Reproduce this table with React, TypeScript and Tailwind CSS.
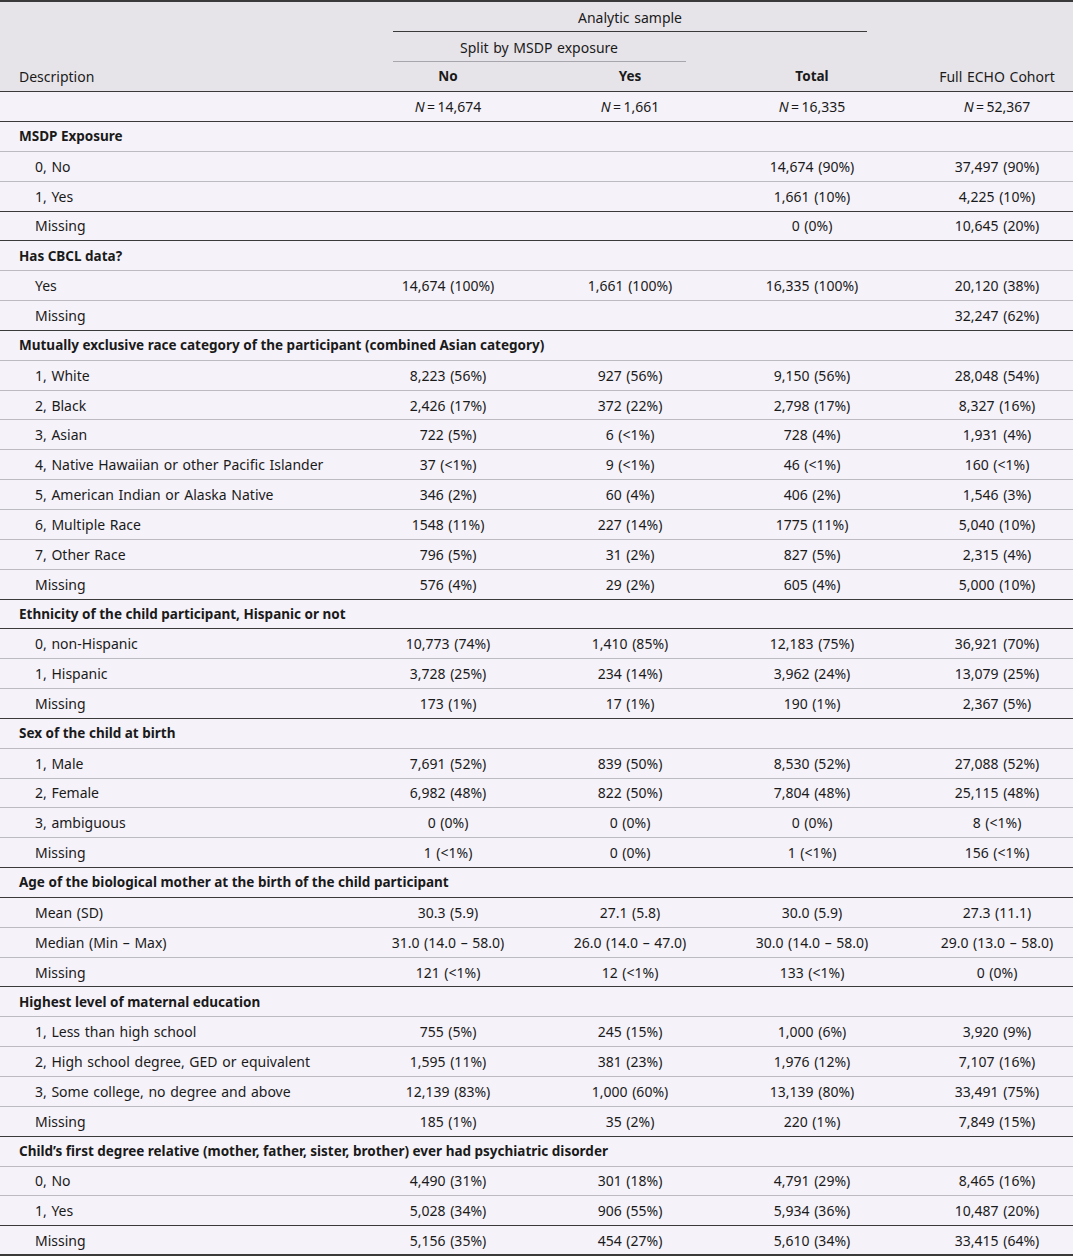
import React from 'react';

type Row = {
  label: string;
  vals?: [string, string, string, string];
  head?: boolean;
  dark?: boolean;
};

const GRID = 'grid grid-cols-[357px_182px_182px_182px_170px]';

const ROWS: Row[] = [
  { label: 'MSDP Exposure', head: true },
  { label: '0, No', vals: ['', '', '14,674 (90%)', '37,497 (90%)'] },
  { label: '1, Yes', vals: ['', '', '1,661 (10%)', '4,225 (10%)'], dark: true },
  { label: 'Missing', vals: ['', '', '0 (0%)', '10,645 (20%)'], dark: true },
  { label: 'Has CBCL data?', head: true },
  { label: 'Yes', vals: ['14,674 (100%)', '1,661 (100%)', '16,335 (100%)', '20,120 (38%)'] },
  { label: 'Missing', vals: ['', '', '', '32,247 (62%)'], dark: true },
  { label: 'Mutually exclusive race category of the participant (combined Asian category)', head: true },
  { label: '1, White', vals: ['8,223 (56%)', '927 (56%)', '9,150 (56%)', '28,048 (54%)'] },
  { label: '2, Black', vals: ['2,426 (17%)', '372 (22%)', '2,798 (17%)', '8,327 (16%)'] },
  { label: '3, Asian', vals: ['722 (5%)', '6 (<1%)', '728 (4%)', '1,931 (4%)'] },
  { label: '4, Native Hawaiian or other Pacific Islander', vals: ['37 (<1%)', '9 (<1%)', '46 (<1%)', '160 (<1%)'] },
  { label: '5, American Indian or Alaska Native', vals: ['346 (2%)', '60 (4%)', '406 (2%)', '1,546 (3%)'] },
  { label: '6, Multiple Race', vals: ['1548 (11%)', '227 (14%)', '1775 (11%)', '5,040 (10%)'] },
  { label: '7, Other Race', vals: ['796 (5%)', '31 (2%)', '827 (5%)', '2,315 (4%)'] },
  { label: 'Missing', vals: ['576 (4%)', '29 (2%)', '605 (4%)', '5,000 (10%)'], dark: true },
  { label: 'Ethnicity of the child participant, Hispanic or not', head: true, dark: true },
  { label: '0, non-Hispanic', vals: ['10,773 (74%)', '1,410 (85%)', '12,183 (75%)', '36,921 (70%)'] },
  { label: '1, Hispanic', vals: ['3,728 (25%)', '234 (14%)', '3,962 (24%)', '13,079 (25%)'] },
  { label: 'Missing', vals: ['173 (1%)', '17 (1%)', '190 (1%)', '2,367 (5%)'], dark: true },
  { label: 'Sex of the child at birth', head: true },
  { label: '1, Male', vals: ['7,691 (52%)', '839 (50%)', '8,530 (52%)', '27,088 (52%)'] },
  { label: '2, Female', vals: ['6,982 (48%)', '822 (50%)', '7,804 (48%)', '25,115 (48%)'] },
  { label: '3, ambiguous', vals: ['0 (0%)', '0 (0%)', '0 (0%)', '8 (<1%)'] },
  { label: 'Missing', vals: ['1 (<1%)', '0 (0%)', '1 (<1%)', '156 (<1%)'], dark: true },
  { label: 'Age of the biological mother at the birth of the child participant', head: true, dark: true },
  { label: 'Mean (SD)', vals: ['30.3 (5.9)', '27.1 (5.8)', '30.0 (5.9)', '27.3 (11.1)'] },
  { label: 'Median (Min – Max)', vals: ['31.0 (14.0 – 58.0)', '26.0 (14.0 – 47.0)', '30.0 (14.0 – 58.0)', '29.0 (13.0 – 58.0)'] },
  { label: 'Missing', vals: ['121 (<1%)', '12 (<1%)', '133 (<1%)', '0 (0%)'], dark: true },
  { label: 'Highest level of maternal education', head: true },
  { label: '1, Less than high school', vals: ['755 (5%)', '245 (15%)', '1,000 (6%)', '3,920 (9%)'] },
  { label: '2, High school degree, GED or equivalent', vals: ['1,595 (11%)', '381 (23%)', '1,976 (12%)', '7,107 (16%)'] },
  { label: '3, Some college, no degree and above', vals: ['12,139 (83%)', '1,000 (60%)', '13,139 (80%)', '33,491 (75%)'] },
  { label: 'Missing', vals: ['185 (1%)', '35 (2%)', '220 (1%)', '7,849 (15%)'], dark: true },
  { label: 'Child’s first degree relative (mother, father, sister, brother) ever had psychiatric disorder', head: true },
  { label: '0, No', vals: ['4,490 (31%)', '301 (18%)', '4,791 (29%)', '8,465 (16%)'] },
  { label: '1, Yes', vals: ['5,028 (34%)', '906 (55%)', '5,934 (36%)', '10,487 (20%)'], dark: true },
  { label: 'Missing', vals: ['5,156 (35%)', '454 (27%)', '5,610 (34%)', '33,415 (64%)'] },
];

const NCount = ({ n }: { n: string }) => (
  <span>
    <i>N</i>
    {'\u2009=\u2009'}
    {n}
  </span>
);

const BodyRow = ({ row, last }: { row: Row; last: boolean }) => {
  const border = last
    ? 'border-b-2 border-[#3a3a3a]'
    : row.dark
      ? 'border-b border-[#3a3a3a]'
      : 'border-b border-[#bdbbc2]';

  if (row.head) {
    return (
      <div className={`h-[29.85px] flex items-center pl-[19px] font-bold text-[13.5px] [word-spacing:0px] whitespace-nowrap ${border}`}>
        {row.label}
      </div>
    );
  }

  return (
    <div className={`${GRID} h-[29.85px] items-center ${border}`}>
      <div className="pl-[35px] whitespace-nowrap">{row.label}</div>
      <div className="text-center">{row.vals?.[0]}</div>
      <div className="text-center">{row.vals?.[1]}</div>
      <div className="text-center">{row.vals?.[2]}</div>
      <div className="text-center pl-[18px]">{row.vals?.[3]}</div>
    </div>
  );
};

const App = () => {
  return (
    <div
      className="w-[1073px] bg-[#f5f2f9] text-[#1a1a1a] text-[14px] [word-spacing:1px]"
      style={{ fontFamily: '"Noto Sans", Roboto, sans-serif' }}
    >
      {/* header block */}
      <div className="bg-[#e7e4e9] border-t-2 border-[#3a3a3a] border-b border-b-[#3a3a3a]">
        <div className={`${GRID} h-[30px] items-center`}>
          <div />
          <div className="col-span-3 h-full flex flex-col justify-center relative">
            <div className="text-center">Analytic sample</div>
            <div className="absolute left-[36px] right-[36px] bottom-0 h-px bg-[#3a3a3a]" />
          </div>
          <div />
        </div>
        <div className={`${GRID} h-[30px] items-center`}>
          <div />
          <div className="col-span-2 h-full flex flex-col justify-center relative">
            <div className="text-center">Split by MSDP exposure</div>
            <div className="absolute left-[36px] right-[35px] bottom-0 h-px bg-[#a8a6ad]" />
          </div>
          <div />
          <div />
        </div>
        <div className={`${GRID} h-[29px] items-center`}>
          <div className="pl-[19px]">Description</div>
          <div className="text-center font-bold text-[13.5px]">No</div>
          <div className="text-center font-bold text-[13.5px]">Yes</div>
          <div className="text-center font-bold text-[13.5px]">Total</div>
          <div className="text-center pl-[18px]">Full ECHO Cohort</div>
        </div>
      </div>

      {/* sample sizes */}
      <div className={`${GRID} h-[30px] items-center border-b border-[#3a3a3a]`}>
        <div />
        <div className="text-center"><NCount n="14,674" /></div>
        <div className="text-center"><NCount n="1,661" /></div>
        <div className="text-center"><NCount n="16,335" /></div>
        <div className="text-center pl-[18px]"><NCount n="52,367" /></div>
      </div>

      {ROWS.map((row, i) => (
        <BodyRow key={i} row={row} last={i === ROWS.length - 1} />
      ))}
    </div>
  );
};

export default App;
